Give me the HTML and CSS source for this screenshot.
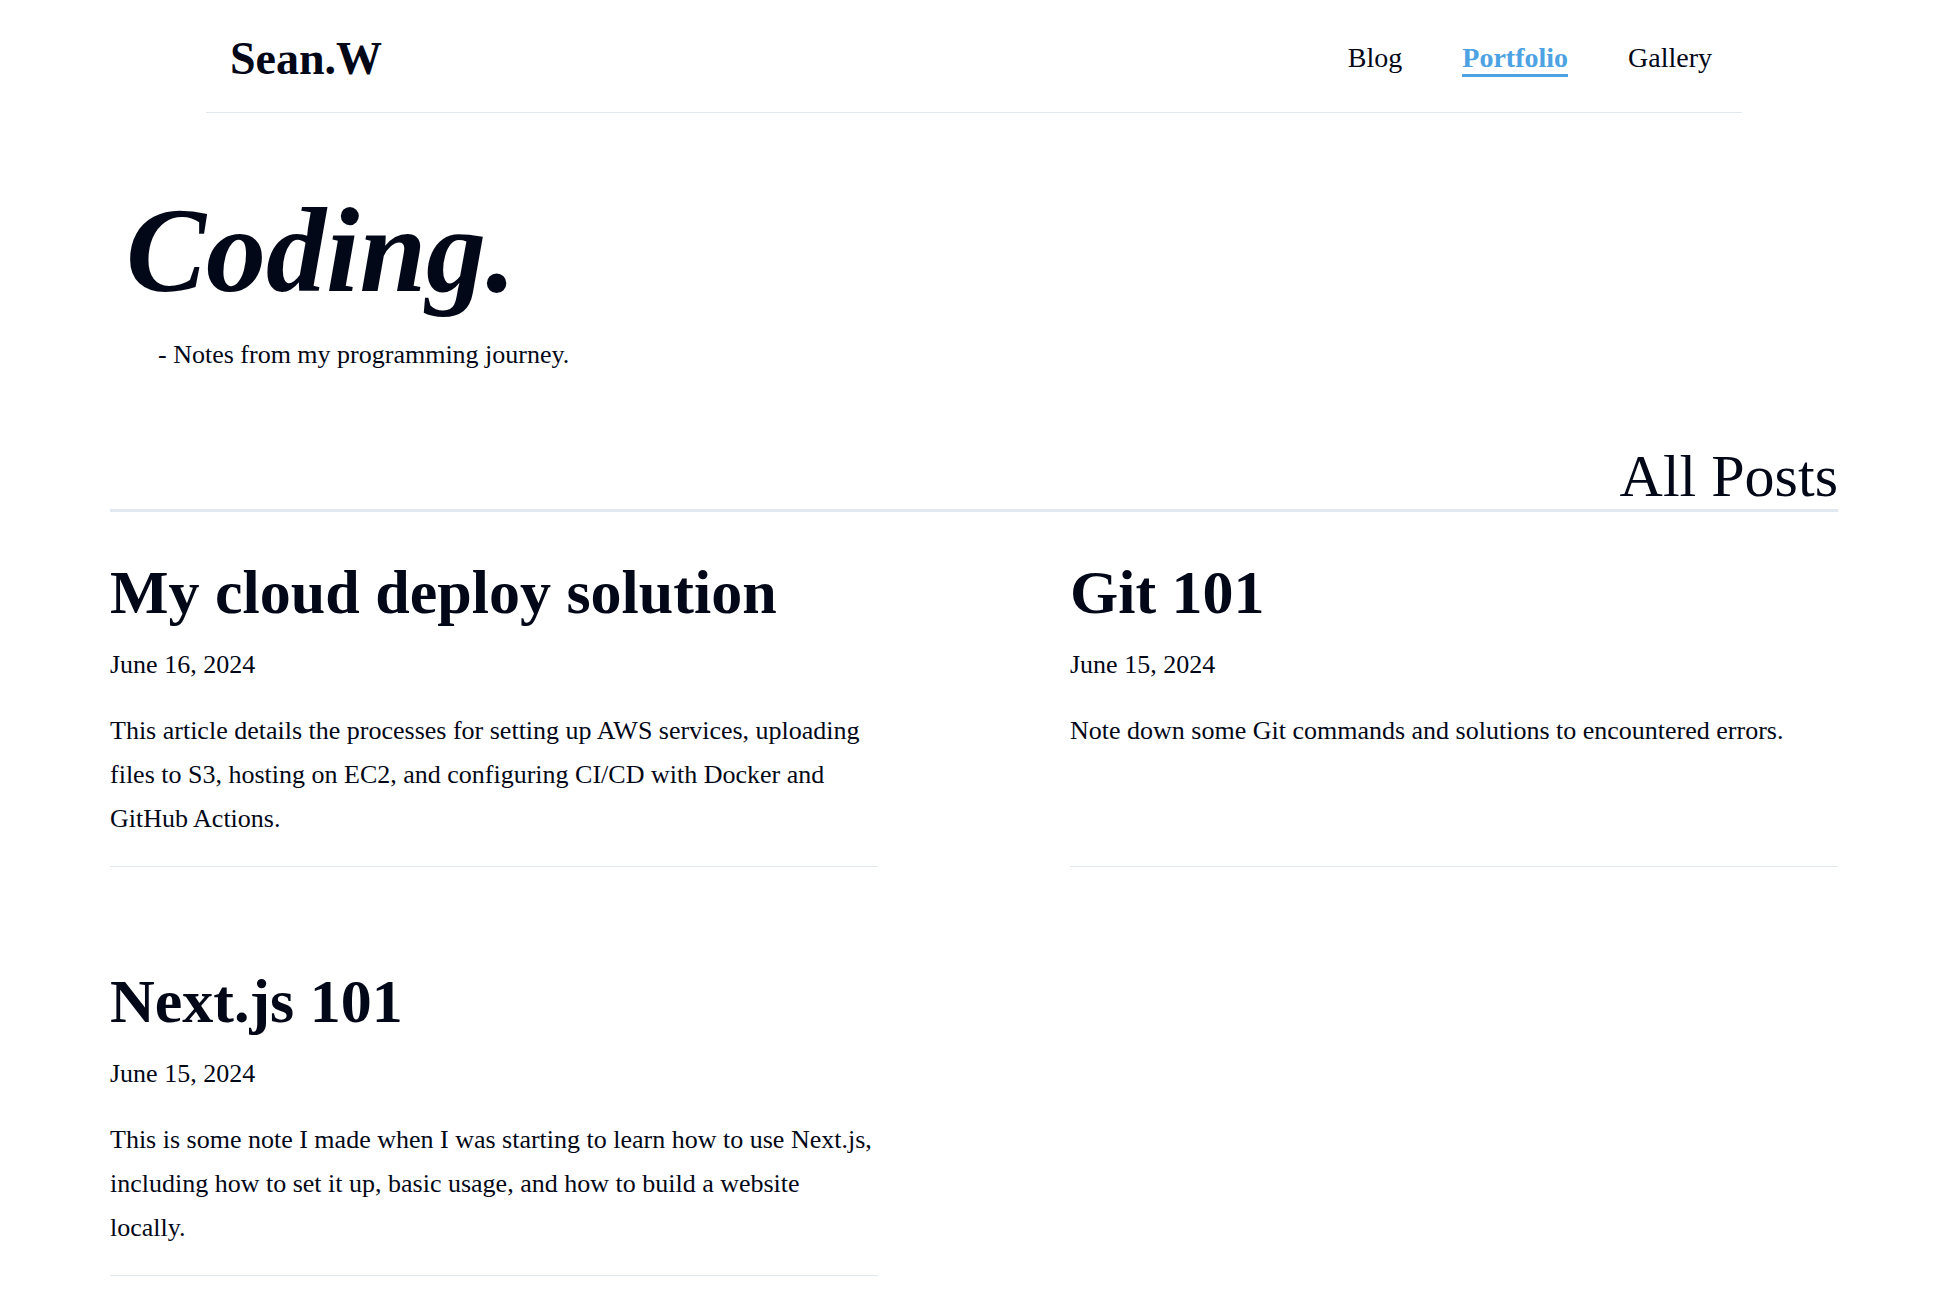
FILE: index.html
```html
<!DOCTYPE html>
<html lang="en">
<head>
<meta charset="utf-8">
<meta name="viewport" content="width=device-width, initial-scale=1">
<title>Sean.W</title>
<link rel="stylesheet" href="styles.css">
</head>
<body>
<div class="page">
  <header class="site-header">
    <a class="logo" href="#">Sean.W</a>
    <nav class="nav">
      <a class="nav-link" href="#">Blog</a>
      <a class="nav-link active" href="#" aria-current="page">Portfolio</a>
      <a class="nav-link" href="#">Gallery</a>
    </nav>
  </header>
  <main>
    <section class="hero">
      <h1 class="hero-title">Coding.</h1>
      <p class="hero-note">- Notes from my programming journey.</p>
    </section>
    <h2 class="section-title">All Posts</h2>
    <div class="posts">
      <article class="post">
        <h3 class="post-title"><a href="#">My cloud deploy solution</a></h3>
        <time class="post-date" datetime="2024-06-16">June 16, 2024</time>
        <p class="post-text">This article details the processes for setting up AWS services, uploading files to S3, hosting on EC2, and configuring CI/CD with Docker and GitHub Actions.</p>
      </article>
      <article class="post">
        <h3 class="post-title"><a href="#">Git 101</a></h3>
        <time class="post-date" datetime="2024-06-15">June 15, 2024</time>
        <p class="post-text">Note down some Git commands and solutions to encountered errors.</p>
      </article>
      <article class="post">
        <h3 class="post-title"><a href="#">Next.js 101</a></h3>
        <time class="post-date" datetime="2024-06-15">June 15, 2024</time>
        <p class="post-text">This is some note I made when I was starting to learn how to use Next.js, including how to set it up, basic usage, and how to build a website locally.</p>
      </article>
    </div>
  </main>
</div>
</body>
</html>
```
FILE: styles.css
```css
* {
  box-sizing: border-box;
}

body,
h1,
h2,
h3,
p {
  margin: 0;
}

body {
  background: #fff;
  color: #020817;
  font-family: "Liberation Serif", serif;
  font-size: 26px;
}

a {
  color: inherit;
  text-decoration: none;
}

.page {
  padding: 0 106px 16px 110px;
}

.site-header {
  display: flex;
  align-items: center;
  justify-content: space-between;
  margin: 0 96px;
  padding: 31px 30px 25px 24px;
  border-bottom: 1px solid #e2e8f0;
}

.logo {
  font-size: 46px;
  line-height: 56px;
  font-weight: 700;
}

.nav {
  display: flex;
  gap: 60px;
}

.nav-link {
  font-size: 28px;
  line-height: 33px;
  border-bottom: 3px solid transparent;
}

.nav-link.active {
  color: #4ca2e3;
  font-weight: 700;
  border-bottom-color: #4ca2e3;
}

.hero {
  padding: 78px 16px 0;
}

.hero-title {
  font-size: 120px;
  line-height: 120px;
  font-style: italic;
  font-weight: 700;
}

.hero-note {
  margin-top: 22px;
  padding-left: 32px;
  line-height: 44px;
}

.section-title {
  margin-top: 69px;
  padding-bottom: 3px;
  border-bottom: 3px solid #e2e8f0;
  font-size: 60px;
  line-height: 60px;
  font-weight: 400;
  text-align: right;
}

.posts {
  display: grid;
  grid-template-columns: 1fr 1fr;
  gap: 102px 192px;
  margin-top: 48px;
}

.post {
  padding-bottom: 25px;
  border-bottom: 1px solid #e2e8f0;
}

.post-title {
  font-size: 62px;
  line-height: 64px;
  font-weight: 700;
}

.post-date {
  display: block;
  margin-top: 23px;
  line-height: 36px;
}

.post-text {
  margin-top: 26px;
  line-height: 44px;
}
```
